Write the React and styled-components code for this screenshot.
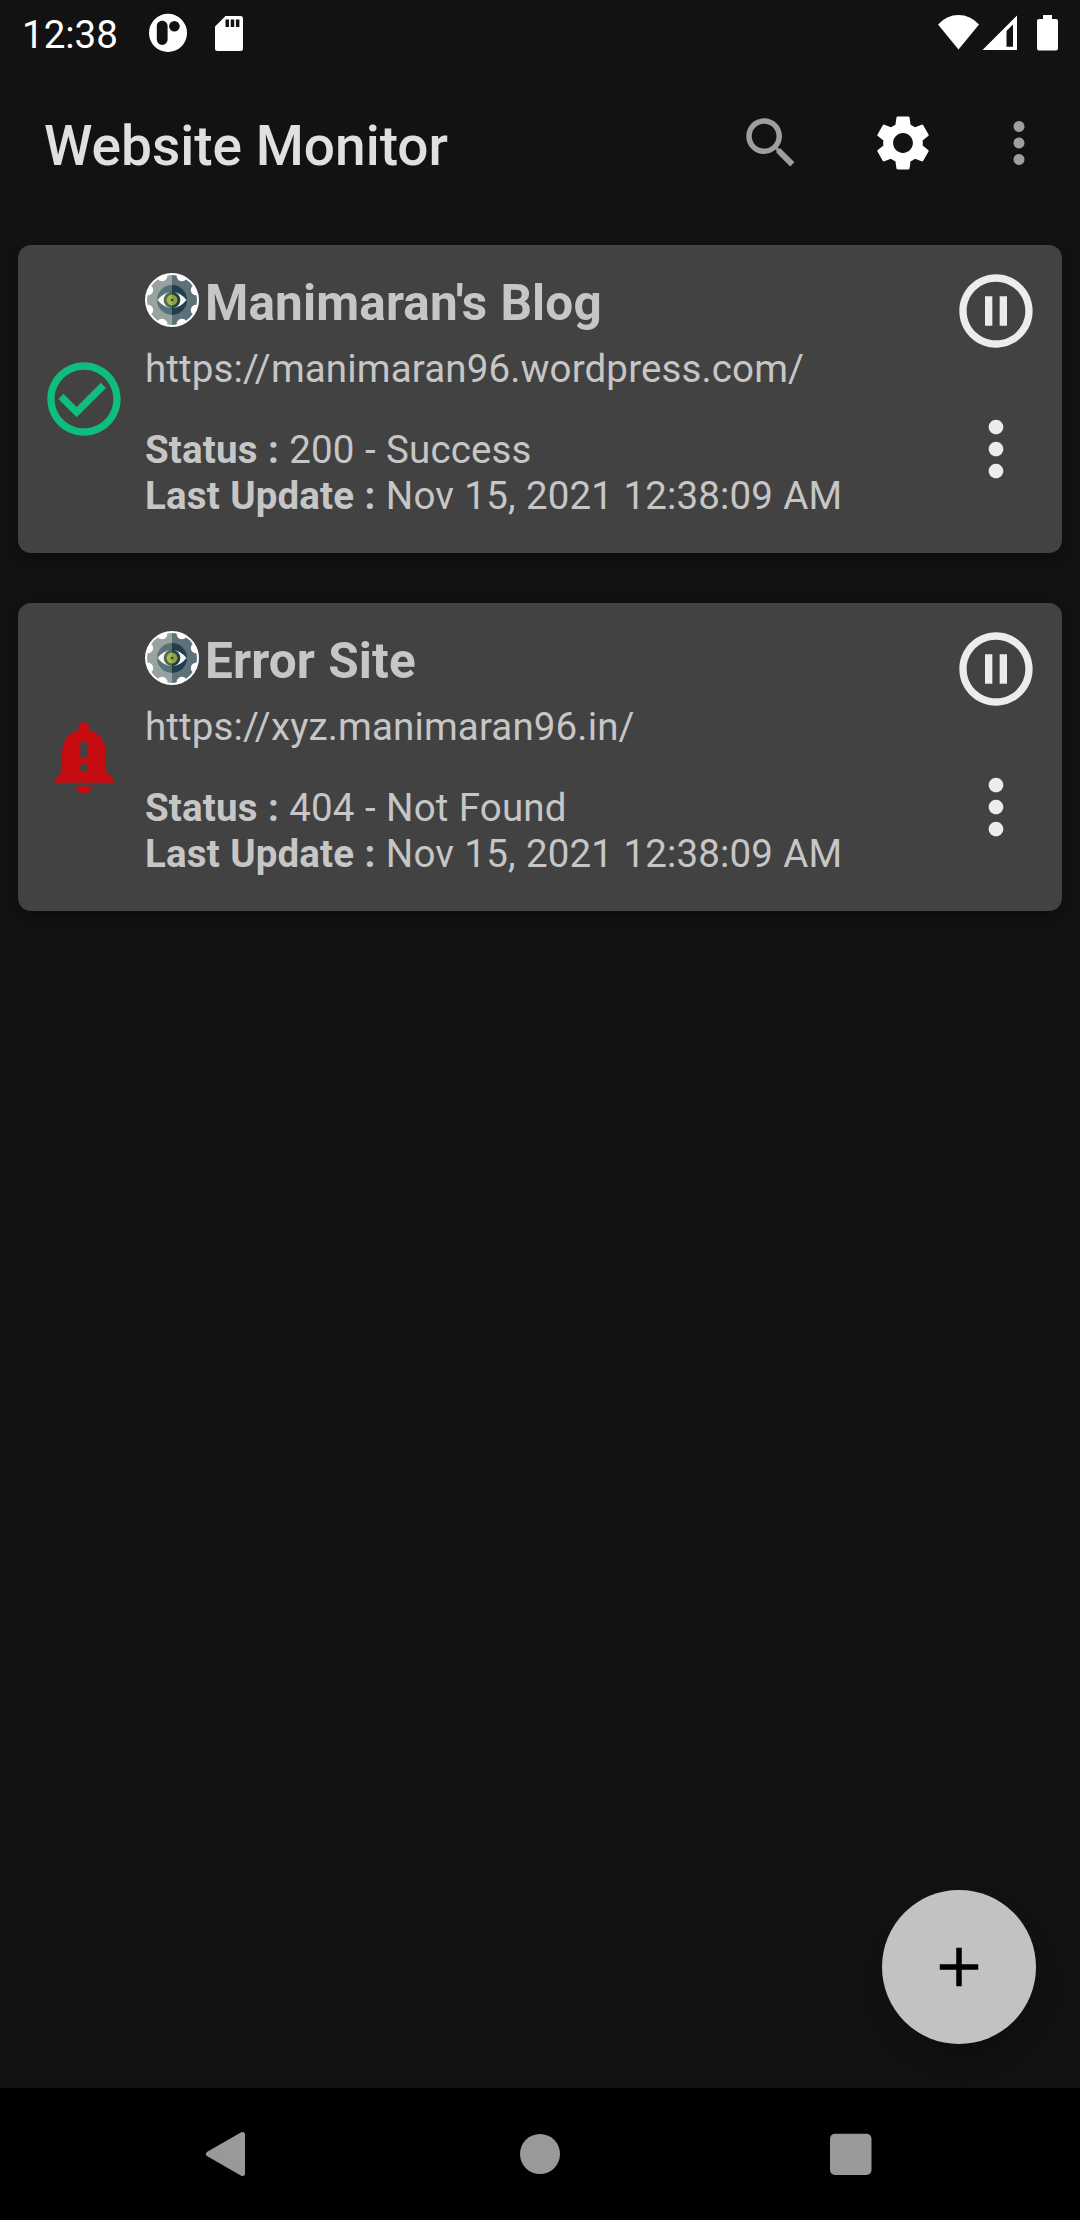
import React from "react";
import styled, { createGlobalStyle } from "styled-components";
import { MdSettings, MdMoreVert, MdPauseCircleOutline, MdAdd } from "react-icons/md";

const GlobalStyle = createGlobalStyle`
  * { box-sizing: border-box; }
  body { margin: 0; background: #121212; }
`;

const Screen = styled.div`
  width: 1080px;
  height: 2220px;
  display: flex;
  flex-direction: column;
  position: relative;
  overflow: hidden;
  background: #121212;
  font-family: Roboto, sans-serif;
  color: #c6c6c6;
  svg { display: block; flex: none; }
`;

const StatusBar = styled.header`
  height: 66px;
  display: flex;
  align-items: center;
  padding: 0 21px 0 22px;
  color: #fff;
`;

const Clock = styled.time`
  width: 127px;
  font-size: 38.5px;
  line-height: 66px;
  padding-top: 3px;
`;

const StatusGroup = styled.div`
  display: flex;
  align-items: center;
  gap: ${(p) => p.$gap}px;
  margin-left: ${(p) => (p.$end ? "auto" : "0")};
`;

const AppBar = styled.div`
  height: 154px;
  display: flex;
  align-items: center;
  padding: 0 28px 0 44px;
`;

const Title = styled.h1`
  margin: 0;
  flex: 1;
  font-size: 55px;
  font-weight: 500;
  line-height: 64px;
  padding-top: 6px;
  color: #e0e0e0;
`;

const Action = styled.button`
  border: 0;
  padding: 0;
  background: none;
  display: flex;
  margin-left: ${(p) => p.$gap || 0}px;
  color: ${(p) => p.$color};
`;

const List = styled.main`
  flex: 1;
  display: flex;
  flex-direction: column;
  gap: 50px;
  padding: 25px 18px 0;
`;

const Card = styled.article`
  height: 308px;
  display: flex;
  padding: 22px;
  border-radius: 13px;
  background: #424242;
  box-shadow: 0 4px 14px rgba(0, 0, 0, 0.35);
`;

const State = styled.div`
  display: flex;
  align-items: center;
  width: 105px;
`;

const Details = styled.div`
  flex: 1;
  min-width: 0;
  font-size: 38.5px;
  line-height: 46px;
  letter-spacing: 0.14px;
  word-spacing: 0.65px;
  white-space: nowrap;
`;

const Heading = styled.div`
  display: flex;
  align-items: center;
  gap: 6px;
  height: 66px;
`;

const Name = styled.h2`
  margin: 0;
  padding-top: 5px;
  font-size: 49.5px;
  line-height: 58px;
  font-weight: 700;
`;

const Url = styled.div`
  margin: 13px 0 35px;
`;

const Controls = styled.div`
  display: flex;
  flex-direction: column;
  gap: 50px;
`;

const AddButton = styled.button`
  position: absolute;
  right: 44px;
  bottom: 176px;
  width: 154px;
  height: 154px;
  border: 0;
  border-radius: 50%;
  padding: 0;
  display: grid;
  place-items: center;
  background: #c2c2c2;
  color: #000;
  box-shadow: 4px 18px 28px rgba(0, 0, 0, 0.2);
`;

const NavBar = styled.nav`
  height: 132px;
  display: flex;
  align-items: center;
  justify-content: space-between;
  padding: 0 208px 0 205px;
  background: #000;
`;

const AppNotice = () => (
  <svg width="38" height="40" viewBox="0 0 38 40" fill="#fff">
    <path
      fillRule="evenodd"
      d="M19 .8a19 19.100 0 1 1 0 38.200A19 19.100 0 0 1 19 .8zM13.200 7.700c-3 0-5.400 2.400-5.400 5.400v13.500c0 3 2.400 5.400 5.400 5.400s5.400-2.400 5.400-5.400v-13.500c0-3-2.400-5.400-5.400-5.400zM25.400 7.900a5.300 5.300 0 1 0 0 10.600a5.300 5.300 0 0 0 0-10.600z"
    />
  </svg>
);

const SdCard = () => (
  <svg width="28" height="35" viewBox="0 0 28 35" fill="#fff">
    <path
      fillRule="evenodd"
      d="M10.500 0H25.500q2.500 0 2.500 2.500V32.500q0 2.500-2.500 2.500H2.500Q0 35 0 32.500V10.500zM10.500 3.500v7.500h3.500v-7.500zM15.700 3.500v7.500h3.500v-7.500zM20.900 3.500v7.500h3.500v-7.500z"
    />
  </svg>
);

const Signals = () => (
  <svg width="121" height="38" viewBox="0 0 121 38" fill="#fff">
    <path d="M0 10.500Q8.500 1 20.500 1T41 10.500L20.500 35.500z" />
    <path fillRule="evenodd" d="M44.500 36L79 1.500V36zM68.500 17v15.800h6.500V10.500z" />
    <path d="M105 1h9v4h4q2 0 2 2v27.500q0 2-2 2h-17q-2 0-2-2V7q0-2 2-2h4z" />
  </svg>
);

const SearchIcon = () => (
  <svg width="66" height="66" viewBox="0 0 24 24" fill="currentColor">
    <path d="M15.500 14h-.8l-.3-.3c1-1.100 1.600-2.600 1.600-4.200C16 5.900 13.100 3 9.500 3S3 5.900 3 9.500 5.900 16 9.500 16c1.600 0 3.100-.6 4.200-1.600l.3.3v.8l5 5 1.500-1.500zM9.500 14C7 14 5 12 5 9.500S7 5 9.500 5 14 7 14 9.500 12 14 9.500 14z" />
  </svg>
);

const SuccessIcon = () => (
  <svg width="88" height="88" viewBox="0 0 24 24" fill="#0fbd7d">
    <path d="M16.590 7.580L10 14.170l-3.590-3.580L5 12l5 5 8-8zM12 2C6.480 2 2 6.480 2 12s4.480 10 10 10 10-4.480 10-10S17.520 2 12 2zm0 18c-4.420 0-8-3.580-8-8s3.580-8 8-8 8 3.580 8 8-3.580 8-8 8z" />
  </svg>
);

const AlertIcon = () => (
  <svg width="88" height="88" viewBox="0 0 24 24" fill="#c60c11">
    <path d="M18 16v-5c0-3.070-1.640-5.640-4.500-6.320V4c0-.83-.67-1.500-1.500-1.500s-1.500.67-1.500 1.500v.68C7.630 5.360 6 7.920 6 11v5l-2 2v1h16v-1l-2-2zm-5 0h-2v-2h2v2zm0-4h-2V8h2v4zm-1 10c1.100 0 2-.9 2-2h-4c0 1.100.9 2 2 2z" />
  </svg>
);

const NOTCHES = [22.5, 67.5, 112.5, 157.5, 202.5, 247.5, 292.5, 337.5];

const SiteLogo = () => (
  <svg width="54" height="54" viewBox="-27 -27 54 54">
    <circle r="27" fill="#fff" />
    <path d="M0-25A25 25 0 0 0 0 25z" fill="#98a2a1" />
    <path d="M0-25A25 25 0 0 1 0 25z" fill="#5d7179" />
    {NOTCHES.map((angle) => (
      <path key={angle} transform={`rotate(${angle})`} d="M-6-26L-4-22.500Q0-19 4-22.500L6-26z" fill="#fff" />
    ))}
    <path d="M0-15A15 15 0 0 0 0 15z" fill="#587078" />
    <path d="M0-15A15 15 0 0 1 0 15z" fill="#213e4a" />
    <path d="M-14.500 0Q-8-8 0-8T14.500 0Q8 8 0 8T-14.500 0z" fill="#f2f4f4" />
    <path d="M0-8.300A8.300 8.300 0 0 0 0 8.300z" fill="#4f6a55" />
    <path d="M0-8.300A8.300 8.300 0 0 1 0 8.300z" fill="#213e4a" />
    <path d="M0-5.400A5.400 5.400 0 0 0 0 5.400z" fill="#a9bc42" />
    <path d="M0-5.400A5.400 5.400 0 0 1 0 5.400z" fill="#8b9f43" />
    <circle r="1.300" fill="#213e4a" />
  </svg>
);

const sites = [
  { name: "Manimaran's Blog", url: "https://manimaran96.wordpress.com/", status: "200 - Success", ok: true },
  { name: "Error Site", url: "https://xyz.manimaran96.in/", status: "404 - Not Found", ok: false },
];

const SiteCard = ({ site }) => (
  <Card>
    <State>{site.ok ? <SuccessIcon /> : <AlertIcon />}</State>
    <Details>
      <Heading>
        <SiteLogo />
        <Name>{site.name}</Name>
      </Heading>
      <Url>{site.url}</Url>
      <div><b>Status :</b> {site.status}</div>
      <div><b>Last Update :</b> Nov 15, 2021 12:38:09 AM</div>
    </Details>
    <Controls>
      <Action $color="#ececec" aria-label="Pause"><MdPauseCircleOutline size={88} /></Action>
      <Action $color="#ececec" aria-label="Options"><MdMoreVert size={88} /></Action>
    </Controls>
  </Card>
);

export default function App() {
  return (
    <Screen>
      <GlobalStyle />
      <StatusBar>
        <Clock>12:38</Clock>
        <StatusGroup $gap={28}>
          <AppNotice />
          <SdCard />
        </StatusGroup>
        <StatusGroup $end>
          <Signals />
        </StatusGroup>
      </StatusBar>
      <AppBar>
        <Title>Website Monitor</Title>
        <Action $color="#9e9e9e" aria-label="Search"><SearchIcon /></Action>
        <Action $color="#fff" $gap={66} aria-label="Settings"><MdSettings size={66} /></Action>
        <Action $color="#9e9e9e" $gap={50} aria-label="More"><MdMoreVert size={66} /></Action>
      </AppBar>
      <List>
        {sites.map((site) => <SiteCard key={site.name} site={site} />)}
      </List>
      <AddButton aria-label="Add"><MdAdd size={66} /></AddButton>
      <NavBar>
        <svg width="45" height="46" viewBox="0 0 45 46">
          <path d="M3.500 23L37.500 3.500V42.500z" fill="#999" stroke="#999" strokeWidth="5" strokeLinejoin="round" />
        </svg>
        <svg width="40" height="40" viewBox="0 0 40 40"><circle cx="20" cy="20" r="20" fill="#999" /></svg>
        <svg width="42" height="42" viewBox="0 0 42 42"><rect y="0.7" width="41.5" height="41.3" rx="5" fill="#999" /></svg>
      </NavBar>
    </Screen>
  );
}
